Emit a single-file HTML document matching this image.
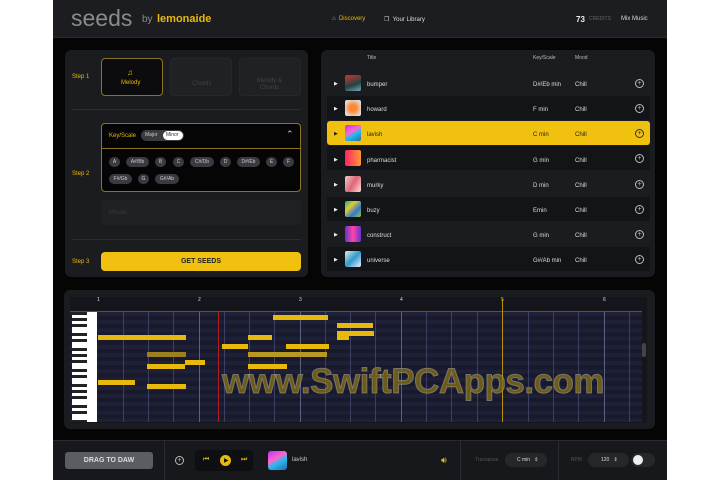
<!DOCTYPE html><html><head><meta charset="utf-8"><style>
*{margin:0;padding:0;box-sizing:border-box}
body{width:720px;height:480px;background:#fff;position:relative;overflow:hidden;font-family:"Liberation Sans",sans-serif;color:#ddd}
.a{position:absolute}
#app{left:53px;top:0;width:614px;height:480px;background:#050506}
.t{position:absolute;white-space:nowrap;font-size:6px}
.y{color:#e8b90c}
.pnl{background:#1b1c20;border-radius:6px}
.row{position:absolute;left:327px;width:323px;height:24px}
.pill{position:absolute;height:10px;border-radius:5px;background:#3a3b40;color:#ccc;font-size:5px;line-height:10px;text-align:center}
.note{position:absolute;height:5px;background:#e8b90c}
.vl{position:absolute;top:312px;height:110px;width:1px;background:#3b4064}
.pc{position:absolute;width:9px;height:9px;border:1px solid #bbb;border-radius:50%;font-size:7px;line-height:7px;text-align:center;color:#bbb}
</style></head><body>
<div id="app" class="a"></div>
<!-- header -->
<div class="a" style="left:53px;top:0;width:614px;height:38px;background:#1c1d21;border-bottom:1px solid #2a2b30"></div>
<div class="t" style="left:71px;top:5px;font-size:23px;color:#8a8b8f">seeds</div>
<div class="t" style="left:142px;top:14px;font-size:10px;color:#8a8b8f">by</div>
<div class="t y" style="left:157px;top:13px;font-size:11px;font-weight:bold">lemonaide</div>
<div class="t y" style="left:332px;top:16px;font-size:6px">⌂ &nbsp;Discovery</div>
<div class="t" style="left:384px;top:16px;font-size:6px;color:#ddd">❐ &nbsp;Your Library</div>
<div class="t" style="left:576px;top:15px;font-size:8px;font-weight:bold;color:#eee">73</div>
<div class="t" style="left:589px;top:16px;font-size:5px;color:#666">CREDITS</div>
<div class="t" style="left:621px;top:16px;font-size:6px;color:#ddd">Mix Music</div>
<!-- left panel -->
<div class="a pnl" style="left:65px;top:50px;width:243px;height:227px"></div>
<div class="t y" style="left:72px;top:74px">Step 1</div>
<div class="t y" style="left:72px;top:171px">Step 2</div>
<div class="t y" style="left:72px;top:259px">Step 3</div>
<div class="a" style="left:101px;top:58px;width:62px;height:38px;border:1px solid #8a7320;border-radius:4px;background:#0c0c0e"></div>
<div class="t y" style="left:127px;top:68px;font-size:8px">♫</div>
<div class="t y" style="left:121px;top:80px;font-size:6px">Melody</div>
<div class="a" style="left:170px;top:58px;width:62px;height:38px;border:1px solid #26272b;border-radius:4px;background:#202125"></div>
<div class="t" style="left:192px;top:81px;color:#444">Chords</div>
<div class="a" style="left:239px;top:58px;width:62px;height:38px;border:1px solid #26272b;border-radius:4px;background:#202125"></div>
<div class="t" style="left:257px;top:78px;color:#444;text-align:center;line-height:7px">Melody &amp;<br>Chords</div>
<div class="a" style="left:72px;top:109px;width:229px;height:1px;background:#2c2d32"></div>
<div class="a" style="left:101px;top:123px;width:200px;height:69px;border:1px solid #8a7320;border-radius:4px;background:#050506"></div>
<div class="a" style="left:102px;top:148px;width:198px;height:1px;background:#8a7320"></div>
<div class="t y" style="left:109px;top:133px">Key/Scale</div>
<div class="a" style="left:141px;top:130px;width:43px;height:11px;border-radius:6px;background:#3a3b40"></div>
<div class="t" style="left:145px;top:132px;font-size:5px;color:#ccc">Major</div>
<div class="a" style="left:163px;top:131px;width:20px;height:9px;border-radius:5px;background:#fff"></div>
<div class="t" style="left:166px;top:132px;font-size:5px;color:#333">Minor</div>
<div class="t" style="left:286px;top:129px;font-size:9px;color:#ccc">⌃</div>
<div class="pill" style="left:109px;top:157px;width:11px">A</div>
<div class="pill" style="left:126px;top:157px;width:23px">A#/Bb</div>
<div class="pill" style="left:155px;top:157px;width:11px">B</div>
<div class="pill" style="left:173px;top:157px;width:11px">C</div>
<div class="pill" style="left:190px;top:157px;width:24px">C#/Db</div>
<div class="pill" style="left:220px;top:157px;width:11px">D</div>
<div class="pill" style="left:237px;top:157px;width:23px">D#/Eb</div>
<div class="pill" style="left:266px;top:157px;width:11px">E</div>
<div class="pill" style="left:283px;top:157px;width:11px">F</div>
<div class="pill" style="left:109px;top:174px;width:23px">F#/Gb</div>
<div class="pill" style="left:138px;top:174px;width:11px">G</div>
<div class="pill" style="left:155px;top:174px;width:24px">G#/Ab</div>
<div class="a" style="left:101px;top:200px;width:200px;height:25px;border-radius:4px;background:#202125"></div>
<div class="t" style="left:109px;top:210px;color:#3a3b40">Moods</div>
<div class="a" style="left:72px;top:239px;width:229px;height:1px;background:#2c2d32"></div>
<div class="a" style="left:101px;top:252px;width:200px;height:19px;border-radius:4px;background:#f1c10f;color:#222;font-size:7px;font-weight:bold;text-align:center;line-height:19px">GET SEEDS</div>
<!-- right panel -->
<div class="a pnl" style="left:321px;top:50px;width:334px;height:227px"></div>
<div class="t" style="left:367px;top:55px;font-size:5px;color:#bbb">Title</div>
<div class="t" style="left:533px;top:55px;font-size:5px;color:#bbb">Key/Scale</div>
<div class="t" style="left:575px;top:55px;font-size:5px;color:#bbb">Mood</div>
<div class="row" style="top:96px;background:#131417"></div>
<div class="row" style="top:146px;background:#131417"></div>
<div class="row" style="top:197px;background:#131417"></div>
<div class="row" style="top:247px;background:#131417"></div>
<div class="row" style="top:121px;background:#f1c10f;border-radius:3px"></div>
<!-- rows -->
<div class="t" style="left:334px;top:72px;font-size:5px;line-height:25.2px;color:#eee">▶<br>▶<br><span style="color:#222">▶</span><br>▶<br>▶<br>▶<br>▶<br>▶</div>
<div class="a" style="left:345px;top:75px;width:16px;height:16px;border-radius:2px;background:linear-gradient(160deg,#c33,#244 60%,#7ab)"></div>
<div class="a" style="left:345px;top:100px;width:16px;height:16px;border-radius:2px;background:radial-gradient(#f83 30%,#ddd 80%)"></div>
<div class="a" style="left:345px;top:125px;width:16px;height:16px;border-radius:2px;background:linear-gradient(150deg,#b3f,#f6c 40%,#2be 60%,#36a)"></div>
<div class="a" style="left:345px;top:150px;width:16px;height:16px;border-radius:2px;background:linear-gradient(90deg,#f26,#f93)"></div>
<div class="a" style="left:345px;top:176px;width:16px;height:16px;border-radius:2px;background:linear-gradient(120deg,#ecc,#d67,#fdd)"></div>
<div class="a" style="left:345px;top:201px;width:16px;height:16px;border-radius:2px;background:linear-gradient(135deg,#2a8,#dc3,#37c,#9c3)"></div>
<div class="a" style="left:345px;top:226px;width:16px;height:16px;border-radius:2px;background:linear-gradient(90deg,#63c,#f4a,#63c)"></div>
<div class="a" style="left:345px;top:251px;width:16px;height:16px;border-radius:2px;background:linear-gradient(135deg,#dee,#39c,#eef)"></div>
<div class="t" style="left:367px;top:73px;line-height:25.2px;color:#ddd">bumper<br>howard<br><span style="color:#222">lavish</span><br>pharmacist<br>murky<br>buzy<br>construct<br>universe</div>
<div class="t" style="left:533px;top:73px;line-height:25.2px;color:#ddd">D#/Eb min<br>F min<br><span style="color:#222">C min</span><br>G min<br>D min<br>Emin<br>G min<br>G#/Ab min</div>
<div class="t" style="left:575px;top:73px;line-height:25.2px;color:#ddd">Chill<br>Chill<br><span style="color:#222">Chill</span><br>Chill<br>Chill<br>Chill<br>Chill<br>Chill</div>
<div class="pc" style="left:635px;top:79px">+</div>
<div class="pc" style="left:635px;top:104px">+</div>
<div class="pc" style="left:635px;top:129px;border-color:#333;color:#333">+</div>
<div class="pc" style="left:635px;top:154px">+</div>
<div class="pc" style="left:635px;top:180px">+</div>
<div class="pc" style="left:635px;top:205px">+</div>
<div class="pc" style="left:635px;top:230px">+</div>
<div class="pc" style="left:635px;top:255px">+</div>
<!-- piano roll -->
<div class="a pnl" style="left:64px;top:290px;width:591px;height:139px"></div>
<div class="a" style="left:70px;top:297px;width:577px;height:126px;background:#15161c"></div>
<div class="a" style="left:70px;top:312px;width:572px;height:110px;background:repeating-linear-gradient(180deg,#1d2036 0 4px,#181a2c 4px 8.2px)"></div>
<div class="a" style="left:70px;top:311px;width:572px;height:1px;background:#4a5070"></div>
<div class="t" style="left:97px;top:297px;font-size:5px">1</div>
<div class="t" style="left:198px;top:297px;font-size:5px">2</div>
<div class="t" style="left:299px;top:297px;font-size:5px">3</div>
<div class="t" style="left:400px;top:297px;font-size:5px">4</div>
<div class="t y" style="left:501px;top:297px;font-size:5px">5</div>
<div class="t" style="left:603px;top:297px;font-size:5px">6</div>
<div class="vl" style="left:199px;background:#5a6080"></div><div class="vl" style="left:300px;background:#5a6080"></div><div class="vl" style="left:401px;background:#5a6080"></div><div class="vl" style="left:604px;background:#5a6080"></div>
<div class="vl" style="left:123px"></div><div class="vl" style="left:148px"></div><div class="vl" style="left:173px"></div><div class="vl" style="left:224px"></div><div class="vl" style="left:249px"></div><div class="vl" style="left:274px"></div><div class="vl" style="left:325px"></div><div class="vl" style="left:350px"></div><div class="vl" style="left:375px"></div><div class="vl" style="left:426px"></div><div class="vl" style="left:451px"></div><div class="vl" style="left:477px"></div><div class="vl" style="left:528px"></div><div class="vl" style="left:553px"></div><div class="vl" style="left:578px"></div><div class="vl" style="left:629px"></div>
<div class="a" style="left:502px;top:299px;width:1px;height:123px;background:#b8900a"></div>
<div class="a" style="left:218px;top:312px;width:1px;height:110px;background:#b02020"></div>
<div class="a" style="left:72px;top:312px;width:25px;height:110px;background:#fff"></div>
<div class="a" style="left:72px;top:312px;width:15px;height:110px;background:repeating-linear-gradient(180deg,#222 0 3px,#fff 3px 6px,#222 6px 9px,#fff 9px 12px,#222 12px 15px,#fff 15px 21px,#222 21px 24px,#fff 24px 27px,#222 27px 30px,#fff 30px 36px)"></div>
<div class="note" style="left:273px;top:315px;width:55px"></div>
<div class="note" style="left:337px;top:323px;width:36px"></div>
<div class="note" style="left:337px;top:331px;width:37px"></div>
<div class="note" style="left:337px;top:335px;width:12px"></div>
<div class="note" style="left:98px;top:335px;width:88px"></div>
<div class="note" style="left:248px;top:335px;width:24px"></div>
<div class="note" style="left:222px;top:344px;width:26px"></div>
<div class="note" style="left:286px;top:344px;width:43px"></div>
<div class="note" style="left:147px;top:352px;width:39px;background:#9c8020"></div>
<div class="note" style="left:248px;top:352px;width:79px;background:#b89820"></div>
<div class="note" style="left:185px;top:360px;width:20px"></div>
<div class="note" style="left:147px;top:364px;width:38px"></div>
<div class="note" style="left:248px;top:364px;width:39px"></div>
<div class="note" style="left:98px;top:380px;width:37px"></div>
<div class="note" style="left:147px;top:384px;width:39px"></div>
<div class="a" style="left:642px;top:343px;width:4px;height:14px;background:#444;border-radius:2px"></div>
<div class="t" style="left:222px;top:362px;font-size:35px;font-weight:bold;color:rgba(130,108,20,.8);-webkit-text-stroke:1px rgba(170,170,170,.5);letter-spacing:-0.5px">www.SwiftPCApps.com</div>
<!-- footer -->
<div class="a" style="left:53px;top:440px;width:614px;height:40px;background:#17181c;border-top:1px solid #2a2b30"></div>
<div class="a" style="left:65px;top:452px;width:88px;height:17px;border-radius:3px;background:#5c5d62;color:#ddd;font-size:7px;font-weight:bold;text-align:center;line-height:17px">DRAG TO DAW</div>
<div class="a" style="left:164px;top:441px;width:1px;height:39px;background:#2a2b30"></div>
<div class="pc" style="left:175px;top:456px">+</div>
<div class="a" style="left:195px;top:450px;width:58px;height:21px;border-radius:3px;background:#0e0f12"></div>
<div class="t y" style="left:203px;top:456px;font-size:7px">⏮</div>
<div class="a" style="left:220px;top:455px;width:11px;height:11px;border-radius:50%;background:#e8b90c"></div>
<div class="t" style="left:224px;top:457px;font-size:6px;color:#111">▶</div>
<div class="t y" style="left:241px;top:456px;font-size:7px">⏭</div>
<div class="a" style="left:268px;top:451px;width:19px;height:19px;border-radius:3px;background:linear-gradient(150deg,#b3f,#f6c 40%,#2be 60%,#36a)"></div>
<div class="t" style="left:292px;top:457px;color:#ccc">lavish</div>
<div class="t y" style="left:441px;top:455px;font-size:9px">🔊︎</div>
<div class="a" style="left:460px;top:441px;width:1px;height:39px;background:#2a2b30"></div>
<div class="t" style="left:475px;top:457px;font-size:5px;color:#555">Transpose</div>
<div class="a" style="left:505px;top:453px;width:42px;height:14px;border-radius:7px;background:#26272b;color:#ddd;font-size:5px;line-height:14px;padding-left:12px">C min &nbsp;&nbsp;⇕</div>
<div class="a" style="left:558px;top:441px;width:1px;height:39px;background:#2a2b30"></div>
<div class="t" style="left:571px;top:457px;font-size:5px;color:#555">BPM</div>
<div class="a" style="left:588px;top:453px;width:41px;height:14px;border-radius:7px;background:#26272b;color:#ddd;font-size:5px;line-height:14px;padding-left:13px">120 &nbsp;&nbsp;⇕</div>
<div class="a" style="left:631px;top:453px;width:24px;height:14px;border-radius:7px;background:#26272b"></div>
<div class="a" style="left:633px;top:455px;width:10px;height:10px;border-radius:50%;background:#eee"></div>
</body></html>
